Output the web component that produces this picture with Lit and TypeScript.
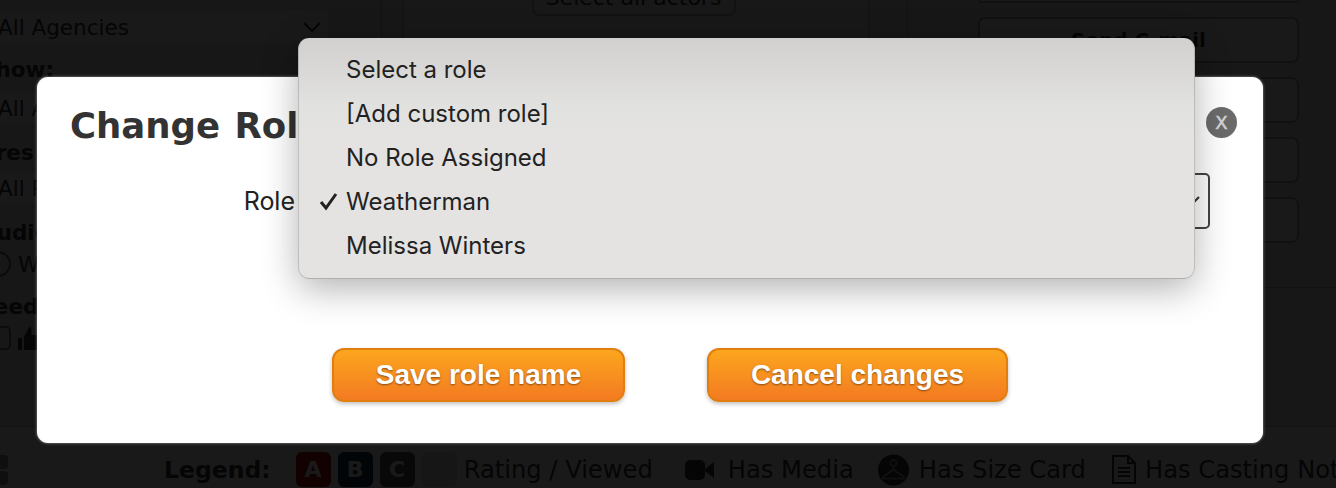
import { LitElement, html, css, svg } from "lit";
import { customElement } from "lit/decorators.js";

const chevron = svg`<svg width="20" height="12" viewBox="0 0 20 12"><path d="M2 2l8 8 8-8" fill="none" stroke="#333" stroke-width="2"/></svg>`;

@customElement("app-root")
export class AppRoot extends LitElement {
  static styles = css`
    :host { display: block; width: 1336px; height: 488px; position: relative; overflow: hidden; background: #fff; font-family: "DejaVu Sans", sans-serif; color: #333; }
    * { box-sizing: border-box; }
    .page { height: 488px; display: flex; flex-direction: column; overflow: hidden; }
    .top { height: 427px; flex: none; display: grid; grid-template-columns: 382px 21px 466px 38px 1fr; background: #eaeaea; border-bottom: 1px solid #ccc; }
    .left { border-right: 1px solid #bbb; margin-left: -2px; padding-top: 11px; overflow: hidden; font-size: 21.5px; display: grid; grid-template-rows: 32px 49px 32px 48px 32px 44px 32px 42px 32px; align-content: start; }
    .sel { width: 330px; background: #fff; display: flex; align-items: center; justify-content: space-between; padding-right: 6px; white-space: nowrap; overflow: hidden; }
    .lab { font-weight: 700; padding-top: 14px; line-height: 26px; margin-left: -18px; white-space: nowrap; }
    .lab.low { padding-top: 16px; }
    .mid { border-left: 1px solid #bbb; border-right: 1px solid #bbb; display: flex; justify-content: center; align-items: flex-start; grid-column: 3; padding-right: 5px; background: #efefef; }
    .btn-o { width: 204px; height: 16px; border: 2px solid #bbb; border-top: 0; border-radius: 0 0 7px 7px; display: flex; justify-content: center; align-items: flex-end; overflow: hidden; font-size: 22px; line-height: 26px; padding-bottom: 3px; white-space: nowrap; }
    .right { grid-column: 5; border-left: 1px solid #bbb; height: 288px; border-bottom: 1px solid #bbb; padding: 0 37px 0 70px; display: flex; flex-direction: column; gap: 14px; }
    .rb { height: 46px; flex: none; border: 2px solid #aaa; border-radius: 7px; background: #fff; display: flex; align-items: center; justify-content: center; font-weight: 700; font-size: 20px; white-space: nowrap; }
    .rb.f { height: 3px; border-top: 0; border-radius: 0 0 7px 7px; }
    .radio { width: 26px; height: 26px; border: 2px solid #666; border-radius: 50%; display: inline-block; margin-left: -13px; flex: none; }
    .row { display: flex; align-items: center; gap: 7px; white-space: nowrap; }
    .check { width: 26px; height: 24px; border: 2px solid #777; border-radius: 5px; margin-left: -13px; flex: none; }
    .legend { flex: 1; display: flex; align-items: center; white-space: nowrap; padding: 24px 0 0 0; font-size: 24.2px; }
    .marks { width: 10px; margin: 0 156px 0 -2px; display: flex; flex-direction: column; gap: 2px; flex: none; }
    .marks i { height: 14px; border-radius: 4px; background: #999; }
    .legend b { margin-right: 25px; font-size: 23.5px; }
    .badge { width: 35px; height: 35px; border-radius: 6px; margin-right: 7px; background: #ddd; color: #fff; font-weight: 700; font-size: 22px; display: flex; align-items: center; justify-content: center; flex: none; }
    .a { background: #a11; } .b { background: #135; } .c { background: #555; }
    .legend svg { flex: none; }
    .vid { margin: 0 14px 0 32px; }
    .hang { margin: 0 10px 0 24px; }
    .doc { margin: 0 9px 0 26px; }
    .shade { position: absolute; inset: 0; background: rgba(0,0,0,.9); }
    .dialog { position: absolute; left: 37px; top: 77px; width: 1226px; height: 366px; background: #fff; border-radius: 11px; padding: 25px 33px 41px; display: flex; flex-direction: column; box-shadow: 0 0 3px rgba(255,255,255,.55); }
    h1 { margin: 0; font-size: 35.5px; line-height: 48px; font-weight: 700; color: #333; white-space: nowrap; word-spacing: 2px; }
    .close { position: absolute; right: 26px; top: 30px; width: 31px; height: 31px; border-radius: 50%; background: #6b6b6b; color: #d4d4d4; display: flex; align-items: center; justify-content: center; font: 400 18px "DejaVu Sans", sans-serif; -webkit-text-stroke: .5px #d4d4d4; }
    .field { display: flex; justify-content: flex-end; align-items: center; margin-top: 23px; height: 56px; margin-right: 20px; }
    .field label { font: 25px Inter, sans-serif; color: #222; margin-right: 9px; }
    .select { width: 906px; height: 56px; border: 2px solid #444; border-radius: 5px; display: flex; justify-content: flex-end; align-items: center; padding-right: 7px; flex: none; }
    .actions { margin-top: auto; display: flex; justify-content: flex-start; gap: 82px; padding-left: 262px; }
    .go { height: 54px; border-radius: 12px; border: 2px solid #e07f10; background: linear-gradient(#fca61e, #f37a21); color: #fff; font: 700 28px "Liberation Sans", sans-serif; text-shadow: 0 1px 2px rgba(0,0,0,.45); box-shadow: 0 2px 4px rgba(0,0,0,.25); display: flex; align-items: center; justify-content: center; }
    .save { width: 293px; } .cancel { width: 301px; }
    .menu { position: absolute; left: 298px; top: 38px; width: 897px; height: 241px; padding: 9px 0; border-radius: 11px; background: linear-gradient(#d2d1cf 0, #d8d7d5 12%, #e1e1df 28%, #e4e3e1 42%, #e4e3e2 100%); border: 1px solid rgba(0,0,0,.16); border-top: 0; box-shadow: 0 10px 36px rgba(0,0,0,.3); font: 24px Inter, sans-serif; color: #222; }
    .opt { height: 44px; display: flex; align-items: center; padding-left: 47px; position: relative; white-space: nowrap; }
    .tick { position: absolute; left: 20px; top: 12px; }
  `;

  render() {
    return html`
      <div class="page">
        <div class="top">
          <div class="left">
            <div class="sel"><span>All Agencies</span>${chevron}</div>
            <div class="lab">Show:</div>
            <div class="sel"><span>All Agents</span></div>
            <div class="lab low">Pres</div>
            <div class="sel"><span>All Results</span></div>
            <div class="lab low">Audio:</div>
            <div class="row"><span class="radio"></span><span>W</span></div>
            <div class="lab">Feed:</div>
            <div class="row"><span class="check"></span>
              <svg width="20" height="24" viewBox="0 0 20 24"><path d="M0 12h4v12H0zM6 11l5-10c3 0 3 3 2 8h7v15H6z" fill="#333"/></svg>
            </div>
          </div>
          <div class="mid"><div class="btn-o">Select all actors</div></div>
          <div class="right">
            <div class="rb f"></div>
            <div class="rb">Send C-mail</div>
            <div class="rb"></div>
            <div class="rb"></div>
            <div class="rb"></div>
          </div>
        </div>
        <div class="legend">
          <div class="marks"><i></i><i></i></div>
          <b>Legend:</b>
          <span class="badge a">A</span><span class="badge b">B</span><span class="badge c">C</span><span class="badge"></span>
          <span>Rating / Viewed</span>
          <svg class="vid" width="29" height="20" viewBox="0 0 29 20"><rect width="20" height="20" rx="5" fill="#333"/><path d="M20 9l9-7v16l-9-7z" fill="#333"/></svg>
          <span>Has Media</span>
          <svg class="hang" width="31" height="32" viewBox="0 0 31 32"><circle cx="15.5" cy="16" r="15.5" fill="#333"/><circle cx="15.5" cy="9" r="3" fill="none" stroke="#aaa" stroke-width="1.6"/><path d="M15.5 12v3.500L5 23v1.500h21V23L15.500 15.500" fill="none" stroke="#aaa" stroke-width="1.600"/></svg>
          <span>Has Size Card</span>
          <svg class="doc" width="24" height="29" viewBox="0 0 24 29"><path d="M1 1h15l7 7v20H1zM16 1v7h7M6 13h12M6 17h12M6 21h12" fill="none" stroke="#333" stroke-width="2"/></svg>
          <span>Has Casting Notes</span>
        </div>
      </div>
      <div class="shade"></div>
      <div class="dialog">
        <h1>Change Role</h1>
        <div class="close">X</div>
        <div class="field"><label>Role</label><div class="select">${chevron}</div></div>
        <div class="actions"><div class="go save">Save role name</div><div class="go cancel">Cancel changes</div></div>
      </div>
      <div class="menu">
        <div class="opt">Select a role</div>
        <div class="opt">[Add custom role]</div>
        <div class="opt">No Role Assigned</div>
        <div class="opt"><svg class="tick" width="20" height="20" viewBox="0 0 20 20"><path d="M2 11l5 6L17 3" fill="none" stroke="#222" stroke-width="3"/></svg>Weatherman</div>
        <div class="opt">Melissa Winters</div>
      </div>
    `;
  }
}
